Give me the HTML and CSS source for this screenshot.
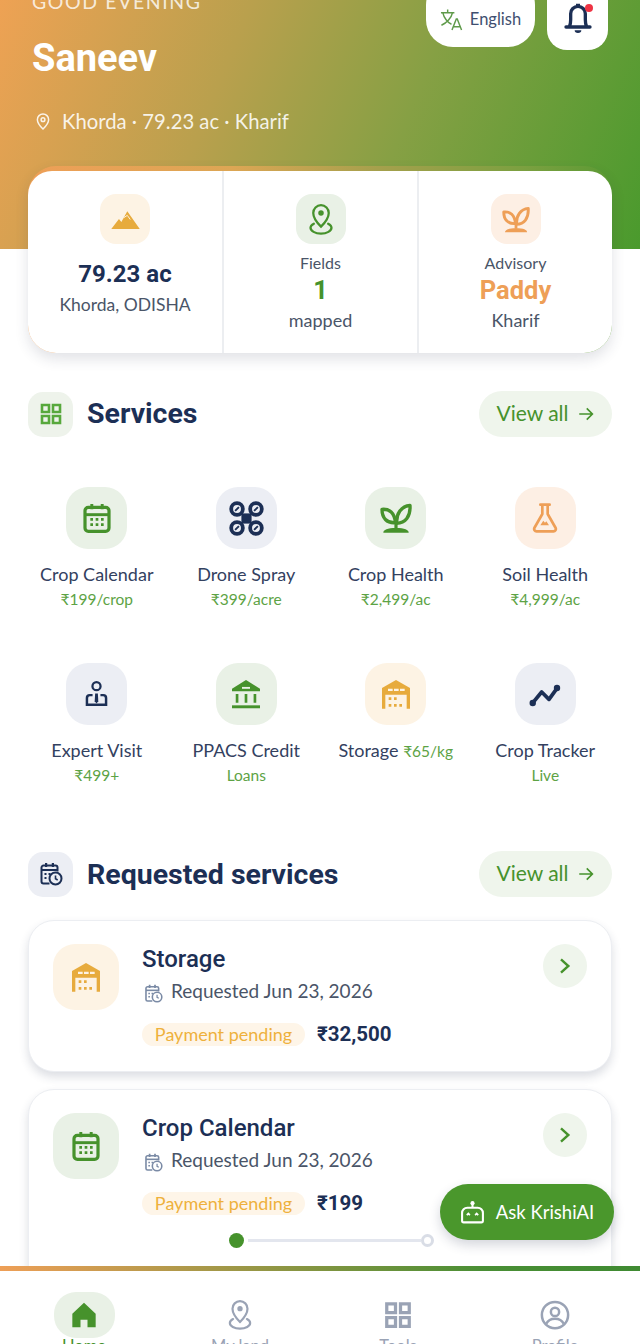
FILE: index.html
```html
<!DOCTYPE html>
<html lang="en">
<head>
  <meta charset="UTF-8">
  <title>KrishiAI Home</title>
  <link rel="stylesheet" href="styles.css">
</head>
<body>

  <svg class="icon-defs" aria-hidden="true">
    <symbol id="i-grid" viewBox="0 0 24 24">
      <path d="M3 3h7v7H3zM14 3h7v7h-7zM3 14h7v7H3zM14 14h7v7h-7z" fill="none" stroke="currentColor" stroke-width="2.600"/>
    </symbol>
    <symbol id="i-calendar" viewBox="0 0 24 24">
      <rect x="3" y="4" width="18" height="18" rx="2.500" fill="none" stroke="currentColor" stroke-width="2.400"/>
      <path d="M3 9.500h18" stroke="currentColor" stroke-width="2.200"/>
      <path d="M7 1.500h2.200v4H7zM14.800 1.500H17v4h-2.200z" fill="currentColor"/>
      <path d="M7 12h2v2H7zM11 12h2v2h-2zM15 12h2v2h-2zM7 16h2v2H7zM11 16h2v2h-2zM15 16h2v2h-2z" fill="currentColor"/>
    </symbol>
    <symbol id="i-drone" viewBox="0 0 24 24">
      <g fill="none" stroke="currentColor" stroke-width="2.600">
        <circle cx="5.500" cy="5.500" r="4"/><circle cx="18.500" cy="5.500" r="4"/>
        <circle cx="5.500" cy="18.500" r="4"/><circle cx="18.500" cy="18.500" r="4"/>
      </g>
      <path d="M8.500 8.500h7v7h-7z" fill="currentColor"/>
      <path d="M4.200 6.800l2.600-2.600M17.200 6.800l2.600-2.600M4.200 19.800l2.600-2.600M17.200 19.800l2.600-2.600" stroke="currentColor" stroke-width="1.300"/>
    </symbol>
    <symbol id="i-sprout" viewBox="0 0 24 24">
      <path d="M1.500 5.500C7 5 11 8 11.500 15.500 5 16 1.500 12 1.500 5.500z" fill="none" stroke="currentColor" stroke-width="2.500" stroke-linejoin="round"/>
      <path d="M22.500 2.500C23 11 19 16 12.500 16 12 9 16 3 22.500 2.500z" fill="none" stroke="currentColor" stroke-width="2.500" stroke-linejoin="round"/>
      <path d="M12 12v8" stroke="currentColor" stroke-width="2.400"/>
      <path d="M2.500 23c0-2.200 3-3.500 9.500-3.500s9.500 1.300 9.500 3.500z" fill="currentColor"/>
    </symbol>
    <symbol id="i-flask" viewBox="0 0 24 24">
      <path d="M8.500 2h7M10 2.500v6.500L4 19.500A1.800 1.800 0 0 0 5.600 22h12.800a1.800 1.800 0 0 0 1.600-2.500L14 9V2.500" fill="none" stroke="currentColor" stroke-width="2" stroke-linejoin="round" stroke-linecap="round"/>
      <path d="M8.500 17.500l2.200-3.500 1.300 1.500 1-1 2 3z" fill="currentColor"/>
    </symbol>
    <symbol id="i-expert" viewBox="0 0 24 24">
      <circle cx="12" cy="5" r="3.600" fill="none" stroke="currentColor" stroke-width="2"/>
      <path d="M8.500 13H6a2.500 2.500 0 0 0-2.500 2.500v6h17v-6A2.500 2.500 0 0 0 18 13h-2.500" fill="none" stroke="currentColor" stroke-width="2.200"/>
      <path d="M10.800 11.500h2.400l.4 7-1.600 2-1.600-2z" fill="currentColor"/>
    </symbol>
    <symbol id="i-bank" viewBox="0 0 24 24">
      <path d="M12 1.500L1.500 8v2h21V8z" fill="currentColor"/>
      <path d="M9 6.700h6v1.400H9z" fill="#e9f1e6"/>
      <path d="M5.300 12v6.500M12 12v6.500M18.700 12v6.500" stroke="currentColor" stroke-width="2" fill="none"/>
      <path d="M1.500 20.500h21v2.200h-21z" fill="currentColor"/>
    </symbol>
    <symbol id="i-storage" viewBox="0 0 24 24">
      <path d="M12 1.500L1.500 7.500V23h2.500V12.500h16V23h2.500V7.500z" fill="currentColor"/>
      <path d="M6 8h3.500v1.800H6zM10.500 8H14v1.800h-3.500zM15 8h3.500v1.800H15z" fill="#fdf3e4"/>
      <path d="M6.500 14.500h2v2h-2zM10.500 14.500h2v2h-2zM6.500 19.500h2v2h-2zM10.500 19.500h2v2h-2zM14.500 19.500h2v2h-2z" fill="currentColor"/>
    </symbol>
    <symbol id="i-trend" viewBox="0 0 24 24">
      <path d="M2.500 19L9.500 10.500l5.500 5.500L21.500 7" fill="none" stroke="currentColor" stroke-width="2.800" stroke-linejoin="round"/>
      <circle cx="2.800" cy="18.800" r="2.400" fill="currentColor"/>
      <circle cx="21" cy="7.500" r="2.400" fill="currentColor"/>
    </symbol>
    <symbol id="i-request" viewBox="0 0 24 24">
      <path d="M10.500 21.500h-6a2 2 0 0 1-2-2V5.500a2 2 0 0 1 2-2h12a2 2 0 0 1 2 2V9.500" fill="none" stroke="currentColor" stroke-width="2"/>
      <path d="M2.500 8h16" stroke="currentColor" stroke-width="2"/>
      <path d="M6 1h2.200v4H6zM12.800 1H15v4h-2.200zM5.500 11h2v2h-2zM9.500 11h2v2h-2zM5.500 15h2v2h-2z" fill="currentColor"/>
      <circle cx="16.500" cy="16.500" r="6" fill="none" stroke="currentColor" stroke-width="2"/>
      <path d="M16.500 13.500v3.300l2.200 1.200" fill="none" stroke="currentColor" stroke-width="1.600"/>
    </symbol>
    <symbol id="i-pin" viewBox="0 0 24 24">
      <path d="M12 2a7.500 7.500 0 0 0-7.500 7.500C4.500 14.500 12 22 12 22s7.500-7.500 7.500-12.500A7.500 7.500 0 0 0 12 2z" fill="none" stroke="currentColor" stroke-width="2"/>
      <circle cx="12" cy="9.500" r="2.500" fill="none" stroke="currentColor" stroke-width="2"/>
    </symbol>
    <symbol id="i-field" viewBox="0 0 20 26">
      <path d="M10 1a6.500 6.500 0 0 0-6.500 6.500C3.500 12.500 10 19 10 19s6.500-6.500 6.500-11.500A6.500 6.500 0 0 0 10 1z" fill="none" stroke="currentColor" stroke-width="1.900"/>
      <circle cx="10" cy="7.500" r="2.300" fill="currentColor"/>
      <path d="M4 16.500C2.200 17.400 1.200 18.500 1.200 20c0 2.600 3.900 4.800 8.800 4.800s8.800-2.200 8.800-4.800c0-1.500-1-2.600-2.800-3.500" fill="none" stroke="currentColor" stroke-width="1.900" stroke-linecap="round"/>
    </symbol>
    <symbol id="i-hills" viewBox="0 0 24 16">
      <path d="M0 16L6.500 7.500 8.500 10 13.500 1 24 16z" fill="currentColor"/>
      <path d="M10.500 6.500l3-2 2.500 3.500" fill="none" stroke="#fdf3e4" stroke-width="0.800"/>
    </symbol>
    <symbol id="i-arrow" viewBox="0 0 24 24">
      <path d="M3 12h17M13 4.500l7.500 7.500-7.500 7.500" fill="none" stroke="currentColor" stroke-width="2.200"/>
    </symbol>
    <symbol id="i-chevron" viewBox="0 0 24 24">
      <path d="M6 2l11 10-11 10" fill="none" stroke="currentColor" stroke-width="3.600"/>
    </symbol>
  </svg>

  <div class="screen">
    <div class="scroll">

      <header class="hero">
        <div class="hero-text">
          <p class="greeting">GOOD EVENING</p>
          <h1 class="hero-name">Saneev</h1>
          <p class="hero-loc">
            <svg class="hero-pin"><use href="#i-pin"/></svg>
            Khorda · 79.23 ac · Kharif
          </p>
        </div>
        <div class="hero-actions">
          <div class="lang-pill">
            <svg class="lang-icon" viewBox="0 0 24 24">
              <path d="M1 5h14M8 1.500V5M3 5c1 5 5 10.500 9 12M13 5C12 10 7 15.500 1.500 18" fill="none" stroke="#5f9a4a" stroke-width="1.500"/>
              <path d="M12.500 23l4.500-11.500h1L22.500 23M14 19.500h7" fill="none" stroke="#5f9a4a" stroke-width="1.500"/>
            </svg>
            English
          </div>
          <div class="bell-btn">
            <svg class="bell-icon" viewBox="0 0 24 24">
              <path d="M3 19.500h18M5.500 19.500c.7-1.500 1-3 1-5.500V9.500a5.500 5.500 0 0 1 11 0V14c0 2.500.3 4 1 5.500" fill="none" stroke="#1c2f55" stroke-width="2.500" stroke-linecap="round"/>
              <path d="M10.500 2h3v2.500h-3zM9.500 22h5a2.500 2 0 0 1-5 0z" fill="#1c2f55"/>
            </svg>
            <span class="bell-dot"></span>
          </div>
        </div>
      </header>

      <main class="content">
        <section class="summary">
          <div class="summary-inner">
            <div class="stat">
              <span class="tile tile-sm tile-yellow"><svg class="stat-hills"><use href="#i-hills"/></svg></span>
              <strong class="stat-big">79.23 ac</strong>
              <span class="stat-line">Khorda, ODISHA</span>
            </div>
            <div class="stat">
              <span class="tile tile-sm tile-green"><svg class="stat-icon"><use href="#i-field"/></svg></span>
              <span class="stat-label">Fields</span>
              <strong class="stat-value green">1</strong>
              <span class="stat-line">mapped</span>
            </div>
            <div class="stat">
              <span class="tile tile-sm tile-orange"><svg class="stat-icon"><use href="#i-sprout"/></svg></span>
              <span class="stat-label">Advisory</span>
              <strong class="stat-value orange">Paddy</strong>
              <span class="stat-line">Kharif</span>
            </div>
          </div>
        </section>

        <div class="section-head">
          <span class="head-icon head-green"><svg><use href="#i-grid"/></svg></span>
          <h2>Services</h2>
          <a class="view-all" href="#"><span>View all</span> <svg><use href="#i-arrow"/></svg></a>
        </div>

        <div class="service-grid">
          <div class="service">
            <span class="tile tile-green"><svg><use href="#i-calendar"/></svg></span>
            <span class="service-name">Crop Calendar</span>
            <span class="service-price">₹199/crop</span>
          </div>
          <div class="service">
            <span class="tile tile-navy"><svg class="tile-drone"><use href="#i-drone"/></svg></span>
            <span class="service-name">Drone Spray</span>
            <span class="service-price">₹399/acre</span>
          </div>
          <div class="service">
            <span class="tile tile-green"><svg><use href="#i-sprout"/></svg></span>
            <span class="service-name">Crop Health</span>
            <span class="service-price">₹2,499/ac</span>
          </div>
          <div class="service">
            <span class="tile tile-orange"><svg><use href="#i-flask"/></svg></span>
            <span class="service-name">Soil Health</span>
            <span class="service-price">₹4,999/ac</span>
          </div>
          <div class="service">
            <span class="tile tile-navy"><svg class="tile-expert"><use href="#i-expert"/></svg></span>
            <span class="service-name">Expert Visit</span>
            <span class="service-price">₹499+</span>
          </div>
          <div class="service">
            <span class="tile tile-green"><svg><use href="#i-bank"/></svg></span>
            <span class="service-name">PPACS Credit</span>
            <span class="service-price">Loans</span>
          </div>
          <div class="service">
            <span class="tile tile-yellow"><svg><use href="#i-storage"/></svg></span>
            <span class="service-name">Storage <span class="service-price">₹65/kg</span></span>
          </div>
          <div class="service">
            <span class="tile tile-navy"><svg><use href="#i-trend"/></svg></span>
            <span class="service-name">Crop Tracker</span>
            <span class="service-price">Live</span>
          </div>
        </div>

        <div class="section-head section-head-req">
          <span class="head-icon head-navy"><svg><use href="#i-request"/></svg></span>
          <h2>Requested services</h2>
          <a class="view-all" href="#"><span>View all</span> <svg><use href="#i-arrow"/></svg></a>
        </div>

        <article class="req-card">
          <span class="tile tile-lg tile-yellow"><svg><use href="#i-storage"/></svg></span>
          <div class="req-body">
            <h3>Storage</h3>
            <p class="req-date"><svg><use href="#i-request"/></svg>Requested Jun 23, 2026</p>
            <div class="req-meta">
              <span class="badge">Payment pending</span>
              <strong class="amount">₹32,500</strong>
            </div>
          </div>
          <span class="chev"><svg><use href="#i-chevron"/></svg></span>
        </article>

        <article class="req-card">
          <span class="tile tile-lg tile-green"><svg><use href="#i-calendar"/></svg></span>
          <div class="req-body">
            <h3>Crop Calendar</h3>
            <p class="req-date"><svg><use href="#i-request"/></svg>Requested Jun 23, 2026</p>
            <div class="req-meta">
              <span class="badge">Payment pending</span>
              <strong class="amount">₹199</strong>
            </div>
          </div>
          <span class="chev"><svg><use href="#i-chevron"/></svg></span>
          <div class="pager">
            <span class="pager-on"></span>
            <span class="pager-line"></span>
            <span class="pager-off"></span>
          </div>
        </article>
      </main>
    </div>

    <button class="ask-btn">
      <svg viewBox="0 0 24 24">
        <circle cx="12" cy="3" r="2" fill="#fff"/>
        <path d="M12 4v3" stroke="#fff" stroke-width="2"/>
        <path d="M7 7.500h10a5 5 0 0 1 5 5V20a1.500 1.500 0 0 1-1.500 1.500h-17A1.500 1.500 0 0 1 2 20v-7.500a5 5 0 0 1 5-5z" fill="none" stroke="#fff" stroke-width="2"/>
        <path d="M6.500 14.500l1.500-1.500 1.500 1.500M14.500 14.500l1.500-1.500 1.500 1.500" fill="none" stroke="#fff" stroke-width="1.600"/>
      </svg>
      Ask KrishiAI
    </button>

    <nav class="bottom-nav">
      <a class="nav-item active" href="#">
        <span class="nav-icon">
          <svg class="nav-home" viewBox="0 0 24 24"><path d="M12 1.500L2 11v11.500h7V16h6v6.500h7V11z" fill="#46922c"/></svg>
        </span>
        Home
      </a>
      <a class="nav-item" href="#">
        <span class="nav-icon"><svg><use href="#i-field"/></svg></span>
        My land
      </a>
      <a class="nav-item" href="#">
        <span class="nav-icon"><svg><use href="#i-grid"/></svg></span>
        Tools
      </a>
      <a class="nav-item" href="#">
        <span class="nav-icon">
          <svg viewBox="0 0 24 24">
            <circle cx="12" cy="12" r="10.500" fill="none" stroke="currentColor" stroke-width="2"/>
            <circle cx="12" cy="9.500" r="3.300" fill="none" stroke="currentColor" stroke-width="2"/>
            <path d="M5 19c1.500-3 4-4 7-4s5.500 1 7 4" fill="none" stroke="currentColor" stroke-width="2"/>
          </svg>
        </span>
        Profile
      </a>
    </nav>
  </div>

</body>
</html>
```

FILE: styles.css
```css
* {
  margin: 0;
  padding: 0;
  box-sizing: border-box;
}

body {
  font-family: 'Lato', 'Noto Sans', sans-serif;
  background: #fff;
  color: #1c2f55;
}

a {
  text-decoration: none;
}

.icon-defs {
  display: none;
}

.screen {
  position: relative;
  width: 640px;
  height: 1344px;
  overflow: hidden;
  background: #fff;
}

.scroll {
  margin-top: -22px;
}

/* header */
.hero {
  height: 271px;
  padding: 0 32px;
  display: flex;
  justify-content: space-between;
  align-items: flex-start;
  background: linear-gradient(112deg, #f0a254 0%, #b9a04d 35%, #86a044 62%, #4a9a2d 100%);
  color: #fff;
}

.greeting {
  margin-top: 13px;
  font-size: 19.500px;
  line-height: 22px;
  letter-spacing: 1.600px;
  color: rgba(255, 255, 255, 0.8);
}

.hero-name {
  margin-top: 22px;
  font-family: 'Roboto', sans-serif;
  font-size: 38px;
  line-height: 46px;
  font-weight: 700;
}

.hero-loc {
  margin-top: 27px;
  display: flex;
  align-items: center;
  gap: 10px;
  font-size: 20.300px;
  line-height: 26px;
  color: rgba(255, 255, 255, 0.88);
}

.hero-pin {
  width: 18px;
  height: 19px;
  margin-left: 2px;
}

.hero-actions {
  display: flex;
  align-items: flex-start;
  gap: 12px;
}

.lang-pill {
  width: 109px;
  height: 69px;
  padding-top: 13px;
  border-radius: 27px;
  background: #fff;
  color: #3f4f70;
  font-size: 16.500px;
  display: flex;
  align-items: center;
  justify-content: center;
  gap: 7px;
}

.lang-icon {
  width: 23px;
  height: 23px;
}

.bell-btn {
  position: relative;
  width: 61px;
  height: 72px;
  border-radius: 20px;
  background: #fff;
  display: flex;
  align-items: center;
  justify-content: center;
}

.bell-icon {
  width: 32px;
  height: 36px;
  margin-top: 6px;
}

.bell-dot {
  position: absolute;
  top: 26px;
  right: 15px;
  width: 8px;
  height: 8px;
  border-radius: 50%;
  background: #ee3344;
}

/* shared icon tiles */
.tile {
  display: flex;
  align-items: center;
  justify-content: center;
  width: 61px;
  height: 62px;
  border-radius: 22px;
}

.tile svg {
  width: 32px;
  height: 32px;
}

.tile svg.tile-drone {
  width: 35px;
  height: 35px;
}

.tile svg.tile-expert {
  width: 27px;
  height: 28px;
}

.tile-sm {
  width: 50px;
  height: 50px;
  border-radius: 16px;
}

.tile-lg {
  width: 66px;
  height: 66px;
  flex-shrink: 0;
}

.tile-green {
  background: #e9f1e6;
  color: #46922c;
}

.tile-navy {
  background: #eceef4;
  color: #1c2f55;
}

.tile-orange {
  background: #fdefe4;
  color: #ee9f57;
}

.tile-yellow {
  background: #fdf3e4;
  color: #e7ab3d;
}

.green {
  color: #46922c;
}

.orange {
  color: #ee9f57;
}

/* summary card */
.content {
  padding: 0 28px;
}

.summary {
  margin-top: -83px;
  padding-top: 5px;
  border-radius: 28px;
  background: linear-gradient(90deg, #ee9f57, #dca654 35%, #a5a04c 60%, #7ba040 85%, #5c9a34);
  box-shadow: 0 6px 14px rgba(40, 50, 80, 0.14);
}

.summary-inner {
  display: grid;
  grid-template-columns: 194px 195px 195px;
  height: 182px;
  background: #fff;
  border-radius: 24px 24px 28px 28px;
}

.stat {
  display: flex;
  flex-direction: column;
  align-items: center;
  padding-top: 23px;
  border-left: 2px solid #eceef1;
  color: #4a5568;
}

.stat:first-child {
  border-left: none;
}

.stat svg.stat-icon {
  width: 28px;
  height: 31px;
}

.stat svg.stat-hills {
  width: 29px;
  height: 19px;
}

.stat-big {
  margin-top: 15px;
  font-family: 'Roboto', sans-serif;
  font-size: 24px;
  line-height: 30px;
  font-weight: 700;
  color: #1c2f55;
}

.stat-big + .stat-line {
  margin-top: 5px;
  font-size: 17.500px;
}

.stat-label {
  margin-top: 9px;
  font-size: 16px;
  line-height: 20px;
}

.stat-value {
  font-family: 'Roboto', sans-serif;
  font-size: 25.500px;
  line-height: 34px;
  font-weight: 700;
}

.stat-line {
  margin-top: 2px;
  font-size: 18px;
  line-height: 22px;
}

/* section titles */
.section-head {
  display: flex;
  align-items: center;
  margin-top: 38px;
}

.section-head-req {
  margin-top: 12px;
}

.section-head h2 {
  flex: 1;
  margin: -2px 0 0 14px;
  font-family: 'Roboto', sans-serif;
  font-size: 28.500px;
  font-weight: 700;
  color: #1c2f55;
}

.section-head-req h2 {
  margin-top: 0;
}

.head-icon {
  width: 45px;
  height: 45px;
  border-radius: 15px;
  display: flex;
  align-items: center;
  justify-content: center;
}

.head-icon svg {
  width: 24px;
  height: 24px;
}

.head-green {
  background: #eef3eb;
  color: #57a83c;
}

.head-navy {
  background: #eceef4;
  color: #1c2f55;
}

.view-all {
  width: 133px;
  height: 46px;
  border-radius: 23px;
  background: #eff5ec;
  color: #46922c;
  font-size: 21px;
  display: flex;
  align-items: center;
  justify-content: center;
  gap: 8px;
}

.view-all span {
  margin-top: -3px;
}

.view-all svg {
  width: 18px;
  height: 18px;
}

/* services */
.service-grid {
  display: grid;
  grid-template-columns: repeat(4, 149.500px);
  grid-auto-rows: 176px;
  margin: 50px -6px 0 -6px;
}

.service {
  display: flex;
  flex-direction: column;
  align-items: center;
}

.service-name {
  margin-top: 14px;
  font-size: 18px;
  line-height: 22px;
  color: #33415f;
}

.service-price {
  margin-top: 4px;
  font-size: 15.500px;
  line-height: 20px;
  color: #5da345;
}

/* requested cards */
.req-card {
  position: relative;
  display: flex;
  align-items: flex-start;
  height: 152px;
  margin-top: 17px;
  padding: 23px 24px;
  background: #fff;
  border: 1px solid #eceef2;
  border-radius: 26px;
  box-shadow: 0 5px 10px rgba(40, 50, 80, 0.16);
}

.section-head-req + .req-card {
  margin-top: 23px;
}

.req-card:last-child {
  height: 300px;
}

.req-body {
  flex: 1;
  margin-left: 23px;
}

.req-body h3 {
  font-family: 'Roboto', sans-serif;
  font-size: 24px;
  line-height: 30px;
  font-weight: 500;
  color: #1c2f55;
}

.req-date {
  display: flex;
  align-items: center;
  gap: 8px;
  margin-top: 4px;
  font-size: 19px;
  line-height: 26px;
  color: #4a5568;
}

.req-date svg {
  width: 19px;
  height: 19px;
  margin-left: 2px;
  margin-top: 4px;
  color: #7a8aa5;
}

.req-meta {
  display: flex;
  align-items: center;
  gap: 12px;
  margin-top: 18px;
}

.badge {
  width: 163px;
  height: 23px;
  border-radius: 12px;
  background: #fef5e8;
  color: #eeb13c;
  font-size: 18px;
  line-height: 23px;
  text-align: center;
}

.amount {
  font-family: 'Roboto', sans-serif;
  font-size: 20.500px;
  font-weight: 700;
  color: #1c2f55;
}

.chev {
  width: 44px;
  height: 44px;
  border-radius: 50%;
  background: #eff5ec;
  color: #46922c;
  display: flex;
  align-items: center;
  justify-content: center;
}

.chev svg {
  width: 16px;
  height: 16px;
}

.pager {
  position: absolute;
  top: 143px;
  left: 200px;
  width: 205px;
  display: flex;
  align-items: center;
}

.pager-on {
  width: 15px;
  height: 15px;
  border-radius: 50%;
  background: #46922c;
}

.pager-line {
  flex: 1;
  height: 3px;
  margin-left: 4px;
  background: #e3e6ee;
}

.pager-off {
  width: 13px;
  height: 13px;
  border-radius: 50%;
  border: 3px solid #d9dde6;
  background: #fff;
}

/* floating chat button */
.ask-btn {
  position: absolute;
  top: 1184px;
  left: 440px;
  width: 174px;
  height: 56px;
  border: none;
  border-radius: 28px;
  background: #4a972c;
  color: #fff;
  font-family: inherit;
  font-size: 18.500px;
  display: flex;
  align-items: center;
  justify-content: center;
  gap: 11px;
  box-shadow: 0 5px 12px rgba(40, 50, 80, 0.2);
}

.ask-btn svg {
  width: 25px;
  height: 25px;
}

/* bottom navigation */
.bottom-nav {
  position: absolute;
  top: 1266px;
  left: 0;
  width: 640px;
  height: 120px;
  padding-top: 26px;
  background: #fff;
  display: grid;
  grid-template-columns: 168px 144px 172px 142px;
}

.bottom-nav::before {
  content: "";
  position: absolute;
  top: 0;
  left: 0;
  width: 100%;
  height: 5px;
  background: linear-gradient(90deg, #ee9f57, #4a8f35 75%, #3f8a32);
}

.nav-item {
  display: flex;
  flex-direction: column;
  align-items: center;
  color: #9aa3b5;
  font-size: 16.500px;
  line-height: 16px;
}

.nav-item.active {
  color: #46922c;
}

.nav-icon {
  width: 61px;
  height: 46px;
  display: flex;
  align-items: center;
  justify-content: center;
  border-radius: 22px;
}

.active .nav-icon {
  background: #e9f1e6;
}

.nav-icon svg {
  width: 30px;
  height: 30px;
}

.nav-icon svg.nav-home {
  width: 28px;
  height: 28px;
}
```
